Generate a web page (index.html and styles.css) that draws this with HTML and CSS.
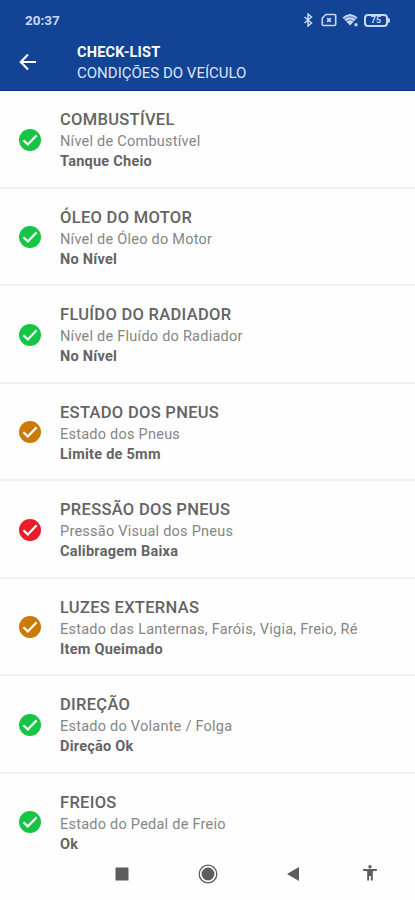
FILE: index.html
```html
<!DOCTYPE html>
<html lang="pt-BR">
<head>
    <meta charset="UTF-8">
    <meta name="viewport" content="width=device-width, initial-scale=1.0">
    <title>Check-list</title>
    <link rel="stylesheet" href="styles.css">
</head>
<body>
    <svg class="sprite">
        <symbol id="check" viewBox="2 2 20 20">
            <circle cx="12" cy="12" r="10" fill="currentColor"/>
            <path d="M6 12.2l4 3.800 8-8.200" fill="none" stroke="#fff" stroke-width="2"/>
        </symbol>
    </svg>
    <div class="header">
        <div class="status-bar">
            <span class="clock">20:37</span>
            <div class="status-icons">
                <svg class="bluetooth" viewBox="0 0 10 14"><path d="M1.500 4l7 6L5 13V1l3.500 3-7 6" fill="none" stroke="currentColor" stroke-width="1.500"/></svg>
                <svg class="sim" viewBox="0 0 16 14"><path d="M5 1.500h8.500a1.200 1.200 0 0 1 1.200 1.200v8.600a1.200 1.200 0 0 1-1.200 1.200h-11a1.200 1.200 0 0 1-1.200-1.200V5z" fill="none" stroke="currentColor" stroke-width="1.600"/><path d="M6.200 5.200l3.600 3.600m0-3.600l-3.600 3.600" stroke="currentColor" stroke-width="1.800"/></svg>
                <svg class="wifi" viewBox="0 0 17 14"><path d="M.5 4.500Q8 -2.500 15.500 4.500L8 12.500z" fill="currentColor"/><path d="M2 6.200q6-5 12 0M4 8.500q4-3.300 8 0" fill="none" stroke="#124395" stroke-width=".7"/><circle cx="14" cy="11.700" r="1.700" fill="currentColor"/></svg>
                <div class="battery">75</div>
            </div>
        </div>
        <div class="app-bar">
            <svg class="back" viewBox="0 0 18 18"><path d="M17 9H2M9 1.500L1.700 9 9 16.500" fill="none" stroke="currentColor" stroke-width="2.100"/></svg>
            <div class="heading">
                <div class="heading-title">CHECK-LIST</div>
                <div class="heading-subtitle">CONDIÇÕES DO VEÍCULO</div>
            </div>
        </div>
    </div>
    <div class="list">
        <div class="item">
            <svg class="status ok"><use href="#check"/></svg>
            <div>
                <div class="title">COMBUSTÍVEL</div>
                <div class="description">Nível de Combustível</div>
                <div class="value">Tanque Cheio</div>
            </div>
        </div>
        <div class="item">
            <svg class="status ok"><use href="#check"/></svg>
            <div>
                <div class="title">ÓLEO DO MOTOR</div>
                <div class="description">Nível de Óleo do Motor</div>
                <div class="value">No Nível</div>
            </div>
        </div>
        <div class="item">
            <svg class="status ok"><use href="#check"/></svg>
            <div>
                <div class="title">FLUÍDO DO RADIADOR</div>
                <div class="description">Nível de Fluído do Radiador</div>
                <div class="value">No Nível</div>
            </div>
        </div>
        <div class="item">
            <svg class="status warning"><use href="#check"/></svg>
            <div>
                <div class="title">ESTADO DOS PNEUS</div>
                <div class="description">Estado dos Pneus</div>
                <div class="value">Limite de 5mm</div>
            </div>
        </div>
        <div class="item">
            <svg class="status danger"><use href="#check"/></svg>
            <div>
                <div class="title">PRESSÃO DOS PNEUS</div>
                <div class="description">Pressão Visual dos Pneus</div>
                <div class="value">Calibragem Baixa</div>
            </div>
        </div>
        <div class="item">
            <svg class="status warning"><use href="#check"/></svg>
            <div>
                <div class="title">LUZES EXTERNAS</div>
                <div class="description">Estado das Lanternas, Faróis, Vigia, Freio, Ré</div>
                <div class="value">Item Queimado</div>
            </div>
        </div>
        <div class="item">
            <svg class="status ok"><use href="#check"/></svg>
            <div>
                <div class="title">DIREÇÃO</div>
                <div class="description">Estado do Volante / Folga</div>
                <div class="value">Direção Ok</div>
            </div>
        </div>
        <div class="item">
            <svg class="status ok"><use href="#check"/></svg>
            <div>
                <div class="title">FREIOS</div>
                <div class="description">Estado do Pedal de Freio</div>
                <div class="value">Ok</div>
            </div>
        </div>
    </div>
    <div class="nav-bar">
        <svg viewBox="0 0 20 20"><rect x="3.500" y="3.500" width="13" height="13" rx=".5" fill="currentColor"/></svg>
        <svg viewBox="0 0 20 20"><circle cx="10" cy="10" r="8.800" fill="none" stroke="currentColor" stroke-width="1.300"/><circle cx="10" cy="10" r="6.400" fill="currentColor"/></svg>
        <svg viewBox="0 0 20 20"><path d="M3 10L15 3v14z" fill="currentColor"/></svg>
        <svg class="accessibility" viewBox="0 0 20 20"><circle cx="10" cy="2.700" r="1.700" fill="currentColor"/><path d="M3 5h14v1.700l-4.200.6V16.500h-1.900V12H9.100v4.500H7.200V7.300L3 6.700z" fill="currentColor"/></svg>
    </div>
</body>
</html>
```
FILE: styles.css
```css
* {
    box-sizing: border-box;
}
body {
    margin: 0;
    height: 900px;
    overflow: hidden;
    display: flex;
    flex-direction: column;
    font-family: Roboto, sans-serif;
    background-color: #fefefe;
    color: #646464;
}
.sprite {
    display: none;
}
.header {
    height: 90.5px;
    flex-shrink: 0;
    background-color: #124395;
    border-bottom: 1px solid #092f8c;
    color: #fff;
}
.status-bar {
    height: 40px;
    padding: 0 25px;
    display: flex;
    align-items: center;
    justify-content: space-between;
    color: #c9d9f5;
}
.clock {
    font-size: 13.5px;
    font-weight: 700;
}
.status-icons {
    display: flex;
    align-items: center;
    gap: 5px;
}
.bluetooth {
    width: 10px;
    height: 14px;
    margin-right: 3px;
}
.sim {
    width: 16px;
    height: 14px;
}
.wifi {
    width: 17px;
    height: 14px;
}
.battery {
    position: relative;
    width: 24px;
    height: 13px;
    margin-right: 2px;
    border: 2px solid #c9d9f5;
    border-radius: 4px;
    font-size: 9px;
    line-height: 9px;
    font-weight: 700;
    text-align: center;
}
.battery::after {
    content: "";
    position: absolute;
    right: -4px;
    top: 2px;
    width: 2px;
    height: 5px;
    border-radius: 0 2px 2px 0;
    background-color: #c9d9f5;
}
.app-bar {
    display: flex;
    align-items: center;
    height: 44px;
    padding-left: 19px;
}
.back {
    width: 18px;
    height: 18px;
    margin-right: 40px;
}
.heading {
    padding-top: 1px;
}
.heading-title {
    font-size: 14.5px;
    line-height: 20px;
    font-weight: 700;
    letter-spacing: 0.2px;
}
.heading-subtitle {
    font-size: 15px;
    line-height: 20px;
    color: #dce6fa;
}
.list {
    flex: 1;
    min-height: 0;
    padding-top: 0.5px;
}
.item {
    height: 97.5px;
    display: flex;
    padding: 18px 0 0 19px;
    border-bottom: 2px solid #f1f1f1;
}
.item:last-child {
    border-bottom: none;
}
.status {
    width: 22px;
    height: 22px;
    margin: 19.5px 19px 0 0;
}
.ok {
    color: #17c544;
}
.warning {
    color: #c97a07;
}
.danger {
    color: #ea1c2a;
}
.title {
    font-size: 16.5px;
    line-height: 22px;
    font-weight: 500;
    letter-spacing: 0.3px;
}
.description {
    font-size: 14.5px;
    line-height: 21px;
    letter-spacing: 0.24px;
    color: #858585;
}
.value {
    font-size: 14.5px;
    line-height: 20px;
    font-weight: 700;
    letter-spacing: 0.25px;
}
.nav-bar {
    height: 52px;
    flex-shrink: 0;
    display: flex;
    align-items: center;
    gap: 66px;
    padding-left: 112px;
    color: #5d5d5d;
}
.nav-bar svg {
    width: 20px;
    height: 20px;
    flex-shrink: 0;
}
.nav-bar .accessibility {
    margin-left: -10px;
}
```
